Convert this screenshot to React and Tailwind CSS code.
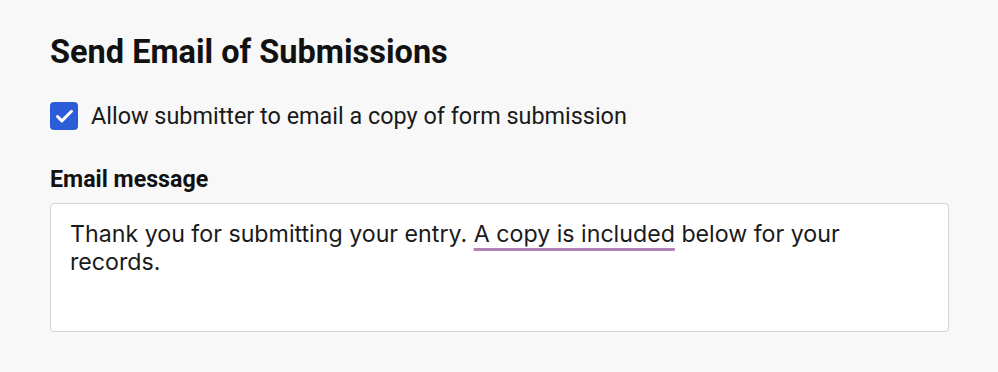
import { Check } from 'lucide-react';

export default function App() {
    return (
        <div className="min-h-[372px] w-full bg-[#f8f8f8] pl-[50px] pr-[49px] pt-[33px] font-['Roboto',sans-serif] text-[#111]">
            <h2 className="text-[32.5px] font-bold leading-[39px]">
                Send Email of Submissions
            </h2>

            <label className="mt-[30px] flex items-center gap-[13px]">
                <span className="flex h-[28px] w-[28px] shrink-0 items-center justify-center rounded-[4px] bg-[#2b5dd8]">
                    <Check size={21} strokeWidth={3.4} color="#fff" />
                </span>
                <span className="text-[23.4px] leading-[28px] text-[#1a1a1a]">
                    Allow submitter to email a copy of form submission
                </span>
            </label>

            <div className="mt-[35px] text-[23.2px] font-bold leading-[28px]">
                Email message
            </div>

            <div className="mt-[10px] h-[129px] rounded-[4px] border border-[#d4d4d4] bg-white px-[19px] pt-[16px] font-['Inter',sans-serif] text-[23.2px] leading-[28px] text-[#1a1a1a]">
                Thank you for submitting your entry.{' '}
                <span className="underline decoration-[#b282b6] decoration-[2.5px] underline-offset-[6px]">
                    A copy is included
                </span>{' '}
                below for your records.
            </div>
        </div>
    );
}
